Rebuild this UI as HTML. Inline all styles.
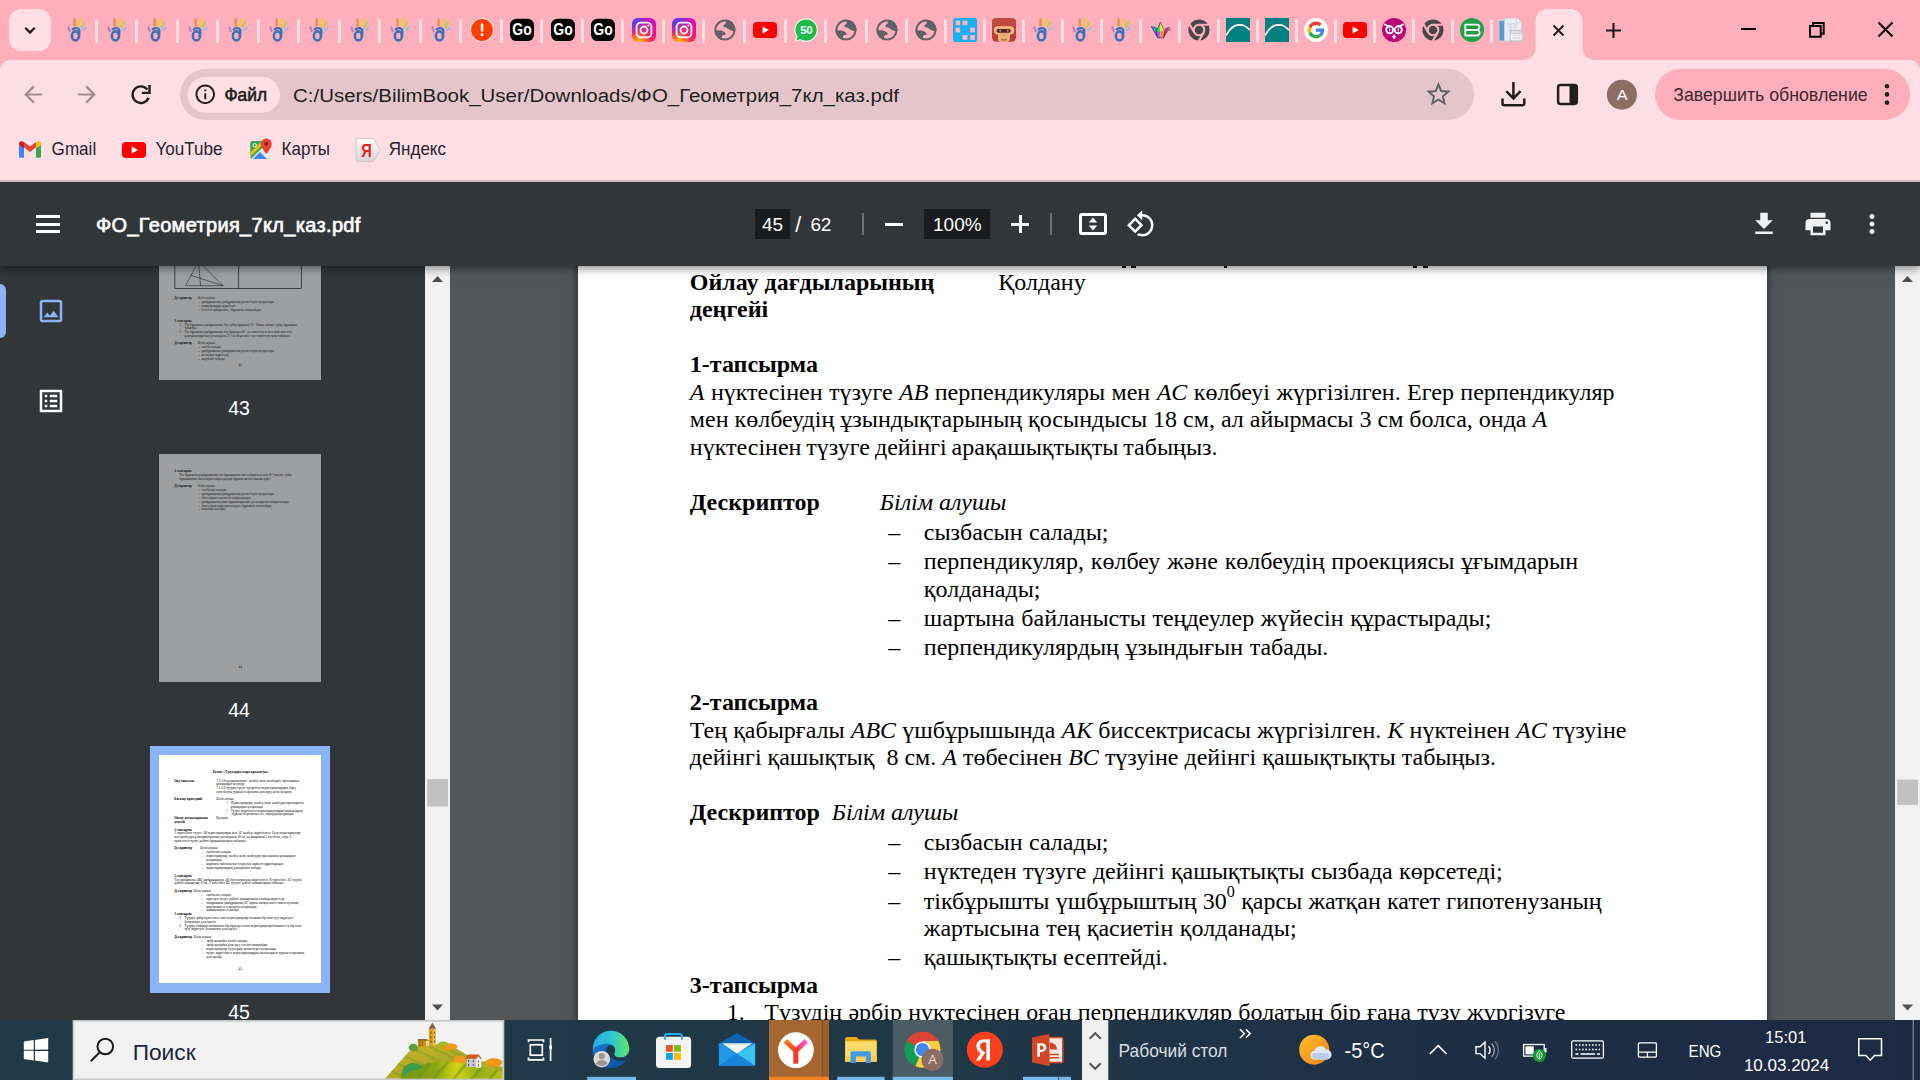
<!DOCTYPE html>
<html lang="ru">
<head>
<meta charset="utf-8">
<title>ФО_Геометрия_7кл_каз.pdf</title>
<style>
*{box-sizing:border-box;margin:0;padding:0}
html,body{width:1920px;height:1080px;overflow:hidden;background:#525659;font-family:"Liberation Sans",sans-serif}
.abs{position:absolute}
svg{position:absolute;display:block;overflow:visible}
.t{position:absolute;white-space:pre;line-height:1}
/* ---------- chrome top ---------- */
#tabstrip{z-index:6;position:absolute;left:0;top:0;width:1920px;height:80px;background:#ffaebb}
#toolbar{z-index:7;position:absolute;left:0;top:60px;width:1920px;height:121px;background:#ffdfe5;border-radius:11px 11px 0 0}
#tbline{z-index:7;position:absolute;left:0;top:180px;width:1920px;height:2px;background:#d4b7bd}
.sep{position:absolute;top:19.3px;width:3px;height:23.6px;border-radius:2px;background:#ffdfe5}
/* ---------- pdf viewer ---------- */
#pdfbar{position:absolute;left:0;top:182px;width:1920px;height:84px;background:#323639;z-index:5;box-shadow:0 2px 9px rgba(0,0,0,.5)}
#side{z-index:2;position:absolute;left:0;top:266px;width:425px;height:754px;background:#323639;overflow:hidden}
#sidescroll{z-index:2;position:absolute;left:425px;top:266px;width:25px;height:754px;background:#f1f1f1}
#mainscroll{z-index:2;position:absolute;left:1895px;top:266px;width:25px;height:754px;background:#f1f1f1}
#content{position:absolute;left:0;top:0;width:1920px;height:1080px;background:#525659;overflow:hidden}
.pg{position:absolute;width:1189px;height:1683px;background:#fff}
#page{box-shadow:0 0 9px rgba(0,0,0,.5)}
.thumb{position:absolute;left:158.9px;width:162.2px;height:228.2px;overflow:hidden;background:#fff}
.tp{left:0;top:0;transform:scale(.13642);transform-origin:0 0}
.tnum{position:absolute;left:139px;width:200px;text-align:center;color:#fff;font-size:19.5px;line-height:24px}
.d{position:absolute;white-space:pre;margin-left:-0.7px;margin-top:0.5px;font-family:"Liberation Serif",serif;font-size:24px;line-height:28px;color:#000}
.d b{font-weight:bold}
.d .sup{font-size:16px;position:relative;top:-12px}
.d i{font-style:italic}

/* pdf toolbar items */
#pdfbar .w{color:#fff}
.pbox{position:absolute;top:27px;height:30px;background:#191b1c}
.ptxt{position:absolute;white-space:pre;color:#fff;font-size:19px;line-height:30px;top:28px}
.psep{position:absolute;top:31px;width:1.6px;height:22px;background:rgba(255,255,255,.3)}
/* ---------- taskbar ---------- */
#taskbar{position:absolute;left:0;top:1020px;width:1920px;height:60px;background:#1c2c42;z-index:9;overflow:hidden}
</style>
</head>
<body>
<div id="tabstrip"><svg width="0" height="0" style="position:absolute"><defs>
<symbol id="hand" viewBox="0 0 24 24"><g fill="none" stroke-linecap="round"><path d="M9.600 1.500v5.800" stroke="#e0913a" stroke-width="2.400" opacity=".9"/><path d="M13.900 7.200l1.600-5.900" stroke="#f2c93a" stroke-width="2.600" opacity=".9"/><path d="M16.700 9l2.500-4.800" stroke="#b4cf4c" stroke-width="2.300" opacity=".9"/><path d="M18 12.200l3-2.400" stroke="#7cc3ee" stroke-width="1.900" opacity=".9"/><path d="M3.300 9.300l1.500 4" stroke="#a877c6" stroke-width="2" opacity=".85"/><ellipse cx="10.400" cy="17.900" rx="3.500" ry="4.500" stroke="#3b73ba" stroke-width="2.600"/><path d="M7.800 11.300c2.300-1.700 5.600-1.500 6.300.6.400 1.400.1 3.600 0 6" stroke="#3b73ba" stroke-width="2.400"/></g></symbol>
<symbol id="globe" viewBox="0 0 24 24"><clipPath id="gc"><circle cx="12" cy="12" r="10.500"/></clipPath><g clip-path="url(#gc)" fill="#5f6368"><path d="M13.400 0L24 0 24 12.600 19.600 13 17 12.100 15.100 10.800 13.200 9.600 10.400 9 10.700 7 12.600 5.400z"/><path d="M0 12.500L4.500 12.200 8.300 12.600 11.400 13.900 12.900 16 12 17.100 10.100 17.100 8.900 18.300 9.300 24 0 24z"/></g><circle cx="12" cy="12" r="9.600" fill="none" stroke="#5f6368" stroke-width="2"/></symbol>
<symbol id="go" viewBox="0 0 24 24"><rect x="0" y="0.7" width="24" height="22.4" rx="6.5" fill="#000"/><text x="2.300" y="17.200" textLength="19.400" lengthAdjust="spacingAndGlyphs" font-family="Liberation Sans" font-weight="bold" font-size="16.500" fill="#fff">Go</text></symbol>
<radialGradient id="igg" cx="0.28" cy="1.08" r="1.300"><stop offset="0" stop-color="#ffd521"/><stop offset=".16" stop-color="#ff9a1a"/><stop offset=".40" stop-color="#ff2a5a"/><stop offset=".70" stop-color="#e10ea0"/><stop offset="1" stop-color="#c016c8"/></radialGradient><radialGradient id="igb" cx="0" cy="0" r=".750"><stop offset="0" stop-color="#4a4ff0"/><stop offset=".450" stop-color="#5a3fe8" stop-opacity=".8"/><stop offset="1" stop-color="#7a30d8" stop-opacity="0"/></radialGradient>
<symbol id="ig" viewBox="0 0 24 24"><rect width="24" height="24" rx="6" fill="url(#igg)"/><rect width="24" height="24" rx="6" fill="url(#igb)"/><rect x="4.6" y="4.6" width="14.8" height="14.8" rx="4.2" fill="none" stroke="#fff" stroke-width="1.8"/><circle cx="12" cy="12" r="3.5" fill="none" stroke="#fff" stroke-width="1.8"/><circle cx="16.4" cy="7.6" r="1" fill="#fff"/></symbol>
<symbol id="yt" viewBox="0 0 24 24"><rect x="0" y="4" width="24" height="16" rx="4" fill="#f00"/><path d="M9.6 8.4v7.2l6.3-3.6z" fill="#fff"/></symbol>
<symbol id="warn" viewBox="0 0 24 24"><circle cx="12" cy="12" r="12" fill="#ffe9e6"/><circle cx="12" cy="12" r="10.9" fill="#ff3d00"/><rect x="10.8" y="5.6" width="2.5" height="8" rx=".6" fill="#fff"/><rect x="10.8" y="15.3" width="2.5" height="2.7" rx=".6" fill="#fff"/></symbol>
<symbol id="wa" viewBox="0 0 24 24"><path d="M12 .2a11.8 11.8 0 1 1-5.9 22L.6 23.8l1.6-5.4A11.8 11.8 0 0 1 12 .2z" fill="#e9fbe9"/><path d="M12 1.4a10.6 10.6 0 1 1-5.6 19.6L2.4 22.2l1.2-3.9A10.6 10.6 0 0 1 12 1.4z" fill="#1dbb4b"/><text x="12.2" y="16.2" text-anchor="middle" font-family="Liberation Sans" font-weight="bold" font-size="11.5" fill="#fff" letter-spacing="-.4">50</text></symbol>
<symbol id="grid" viewBox="0 0 24 24"><rect width="24" height="24" rx="2.5" fill="#1ab1f3"/><g fill="#ffb7c6"><rect x="2.6" y="2.6" width="4.6" height="4.6"/><rect x="9.6" y="2.6" width="4.8" height="4.6"/><rect x="2.6" y="9.6" width="4.6" height="4.8"/><rect x="17.2" y="9.6" width="4.6" height="4.8"/><rect x="9.6" y="17" width="4.8" height="4.8"/><rect x="17.2" y="17" width="4.6" height="4.8"/></g></symbol>
<symbol id="monkey" viewBox="0 0 24 24"><rect width="24" height="23.800" rx="4.500" fill="#bb3f34"/><path d="M4.500 0h15a4.500 4.500 0 0 1 4.500 4.500V9H0V4.500A4.500 4.500 0 0 1 4.500 0z" fill="#c24a3c"/><rect x="1.800" y="8.300" width="20.500" height="8.200" rx="4.100" fill="#f2c183"/><path d="M6 14h11.800v6.800a3 3 0 0 1-3 3H9a3 3 0 0 1-3-3z" fill="#f2c183"/><rect x="3.200" y="9.700" width="17.700" height="5.600" rx="2.800" fill="#ecb27a"/><rect x="7.300" y="15" width="9.200" height="8.800" fill="#e9ad76"/><rect x="4.500" y="11" width="14.200" height="3.700" rx="1.850" fill="#5a2018"/><circle cx="8.200" cy="12.800" r="1" fill="#9aa0a8"/><circle cx="15.700" cy="12.800" r="1" fill="#9aa0a8"/><rect x="9.500" y="16.600" width="5" height=".9" fill="#d49a62"/><rect x="9" y="21.100" width="6" height="1.300" fill="#a8703a"/></symbol>
<symbol id="crane" viewBox="0 0 24 24"><g stroke="#15152a" stroke-width=".55" stroke-linejoin="round"><path d="M2.100 8.300L8.400 10.600 7.200 13.800 8.700 19.700z" fill="#2f9cf0"/><path d="M15.700 13.800L16.400 10.800 19.800 9.300 21.600 11.700 18.900 12.300 14.500 19.700z" fill="#f03c8a"/><path d="M20.300 9.900l1.300 1.800-1.900.5z" fill="#9ab0a8" stroke="none"/></g><path d="M11.400 4L7.200 13.800h4.200z" fill="#46e04a"/><path d="M11.400 4l4.300 9.800h-4.300z" fill="#ffe050"/><path d="M7.200 13.800h4.200v6.200l-2.700-.3z" fill="#a55cf5"/><path d="M11.400 13.800h4.300l-1.200 5.900-3.100.3z" fill="#ff8c3a"/><path d="M11.400 4L7.200 13.800l1.500 5.900 2.700.3 3.100-.3 1.200-5.900z" fill="none" stroke="#15152a" stroke-width=".55" stroke-linejoin="round"/><path d="M7.200 13.800h8.500" stroke="#15152a" stroke-width=".4" opacity=".6"/></symbol>
<symbol id="chrome" viewBox="0 0 24 24"><circle cx="12" cy="12" r="10.600" fill="#46474a"/><g stroke="#ffadba" stroke-width="2.100" fill="none"><circle cx="12" cy="12" r="5.300"/><path d="M12 6.700h9.600M7.400 14.700L2.600 6.400M16.600 14.700l-4.900 8.400"/></g><circle cx="12" cy="12" r="3.600" fill="#46474a"/></symbol>
<symbol id="teal" viewBox="0 0 24 24"><rect width="24" height="24" fill="#00807f"/><path d="M0 17.500C3.500 11 8 7.500 11.500 7h5c3 1 5.500 3 7.500 5" fill="none" stroke="#f2ecec" stroke-width="1.800"/></symbol>
<symbol id="goog" viewBox="0 0 24 24"><circle cx="12" cy="12" r="12" fill="#fff"/><g transform="translate(3.600 3.600) scale(.35)"><path fill="#EA4335" d="M24 9.500c3.540 0 6.710 1.220 9.210 3.600l6.850-6.850C35.900 2.380 30.470 0 24 0 14.620 0 6.510 5.380 2.560 13.220l7.980 6.190C12.430 13.720 17.740 9.500 24 9.500z"/><path fill="#4285F4" d="M46.980 24.550c0-1.570-.15-3.090-.38-4.550H24v9.020h12.940c-.58 2.960-2.260 5.480-4.780 7.180l7.730 6c4.510-4.180 7.090-10.360 7.090-17.650z"/><path fill="#FBBC05" d="M10.530 28.590c-.48-1.450-.76-2.990-.76-4.590s.27-3.140.76-4.590l-7.980-6.190C.92 16.460 0 20.120 0 24c0 3.880.92 7.540 2.560 10.780l7.970-6.190z"/><path fill="#34A853" d="M24 48c6.480 0 11.930-2.130 15.890-5.810l-7.730-6c-2.150 1.450-4.920 2.300-8.160 2.300-6.260 0-11.570-4.220-13.470-9.910l-7.980 6.190C6.510 42.620 14.620 48 24 48z"/></g></symbol>
<symbol id="owl" viewBox="0 0 24 24"><circle cx="12" cy="12" r="12" fill="#bb0676"/><g fill="none" stroke="#fff" stroke-width="1.900"><circle cx="7.700" cy="11.800" r="3.500"/><circle cx="16.300" cy="11.800" r="3.500"/><path d="M3 6.400c1.600 1.300 3.400 1.900 5 1.900M21 6.400c-1.600 1.300-3.400 1.900-5 1.900" stroke-linecap="round"/></g><rect x="7" y="10.300" width="1.300" height="3" rx=".6" fill="#fff"/><rect x="15.700" y="10.300" width="1.300" height="3" rx=".6" fill="#fff"/><path d="M12 16.200l2 2.500-2 2.600-2-2.600z" fill="#fff"/></symbol>
<symbol id="bgreen" viewBox="0 0 24 24"><circle cx="12" cy="12" r="12" fill="#1fa049"/><path d="M5.300 6.700h11.200c1.800 0 2.900 1 2.900 2.500 0 1.300-.7 2.300-1.900 2.800 1.400.4 2.200 1.400 2.200 2.800 0 1.700-1.200 2.700-3.200 2.700H5.300z" fill="#0f9a3c" stroke="#fff" stroke-width="1.800" stroke-linejoin="round"/><path d="M5.300 12h12.500" stroke="#fff" stroke-width="2"/></symbol>
<symbol id="docs" viewBox="0 0 24 24"><path d="M0 2.500h5.500V23H0z" fill="#5b9bd5"/><path d="M0 2.500h5.500V23H0z" fill="none" stroke="#c9dcef" stroke-width=".8"/><path d="M5.500 0h12l5 4.500V23H5.500z" fill="#e8edf3" stroke="#c3ccd8" stroke-width=".8"/><path d="M17.500 0v4.500h5" fill="#fff" stroke="#c3ccd8" stroke-width=".8"/><g stroke="#cfd6e0" stroke-width=".9"><path d="M8 6h11M8 9h11M8 12h11M12 5v9M16 5v9"/></g><rect x="11.200" y="12.800" width="12" height="10" fill="#f4f6f9" stroke="#b9c3d0" stroke-width=".9"/><rect x="11.200" y="12.800" width="12" height="2.600" fill="#dfe5ee" stroke="#b9c3d0" stroke-width=".9"/><rect x="14" y="17.500" width="7" height="3.200" fill="#e9edf3" stroke="#cfd6e0" stroke-width=".7"/></symbol>
</defs></svg>
<div class="abs" style="left:9px;top:9px;width:42px;height:42px;border-radius:12px;background:#ffdfe5"></div>
<svg style="left:21px;top:21px" width="18" height="18" viewBox="0 0 18 18"><path d="M4.300 6.800L9 11.500l4.700-4.700" fill="none" stroke="#1f1f1f" stroke-width="2.300"/></svg>
<div class="sep" style="left:94.8px"></div><div class="sep" style="left:134.8px"></div><div class="sep" style="left:176.0px"></div><div class="sep" style="left:216.0px"></div><div class="sep" style="left:257.2px"></div><div class="sep" style="left:297.2px"></div><div class="sep" style="left:337.8px"></div><div class="sep" style="left:378.0px"></div><div class="sep" style="left:419.0px"></div><div class="sep" style="left:459.0px"></div><div class="sep" style="left:500.0px"></div><div class="sep" style="left:540.0px"></div><div class="sep" style="left:580.5px"></div><div class="sep" style="left:621.0px"></div><div class="sep" style="left:661.5px"></div><div class="sep" style="left:702.0px"></div><div class="sep" style="left:743.0px"></div><div class="sep" style="left:783.5px"></div><div class="sep" style="left:824.0px"></div><div class="sep" style="left:864.5px"></div><div class="sep" style="left:904.5px"></div><div class="sep" style="left:944.0px"></div><div class="sep" style="left:982.5px"></div><div class="sep" style="left:1022.0px"></div><div class="sep" style="left:1061.0px"></div><div class="sep" style="left:1100.0px"></div><div class="sep" style="left:1139.0px"></div><div class="sep" style="left:1177.9px"></div><div class="sep" style="left:1217.0px"></div><div class="sep" style="left:1256.0px"></div><div class="sep" style="left:1295.0px"></div><div class="sep" style="left:1334.1px"></div><div class="sep" style="left:1372.9px"></div><div class="sep" style="left:1411.9px"></div><div class="sep" style="left:1451.0px"></div><div class="sep" style="left:1490.0px"></div>
<svg style="left:64.5px;top:18.0px" width="24" height="24"><use href="#hand"/></svg><svg style="left:104.8px;top:18.0px" width="24" height="24"><use href="#hand"/></svg><svg style="left:145.2px;top:18.0px" width="24" height="24"><use href="#hand"/></svg><svg style="left:185.8px;top:18.0px" width="24" height="24"><use href="#hand"/></svg><svg style="left:226.3px;top:18.0px" width="24" height="24"><use href="#hand"/></svg><svg style="left:267.0px;top:18.0px" width="24" height="24"><use href="#hand"/></svg><svg style="left:307.3px;top:18.0px" width="24" height="24"><use href="#hand"/></svg><svg style="left:347.7px;top:18.0px" width="24" height="24"><use href="#hand"/></svg><svg style="left:388.2px;top:18.0px" width="24" height="24"><use href="#hand"/></svg><svg style="left:428.8px;top:18.0px" width="24" height="24"><use href="#hand"/></svg><svg style="left:469.9px;top:18.0px" width="24" height="24"><use href="#warn"/></svg><svg style="left:510.0px;top:18.0px" width="24" height="24"><use href="#go"/></svg><svg style="left:551.0px;top:18.0px" width="24" height="24"><use href="#go"/></svg><svg style="left:591.0px;top:18.0px" width="24" height="24"><use href="#go"/></svg><svg style="left:632.0px;top:18.0px" width="24" height="24"><use href="#ig"/></svg><svg style="left:672.0px;top:18.0px" width="24" height="24"><use href="#ig"/></svg><svg style="left:713.0px;top:18.0px" width="24" height="24"><use href="#globe"/></svg><svg style="left:752.8px;top:18.0px" width="24" height="24"><use href="#yt"/></svg><svg style="left:794.0px;top:18.0px" width="24" height="24"><use href="#wa"/></svg><svg style="left:834.0px;top:18.0px" width="24" height="24"><use href="#globe"/></svg><svg style="left:874.6px;top:18.0px" width="24" height="24"><use href="#globe"/></svg><svg style="left:913.8px;top:18.0px" width="24" height="24"><use href="#globe"/></svg><svg style="left:953.0px;top:18.0px" width="24" height="24"><use href="#grid"/></svg><svg style="left:992.0px;top:18.0px" width="24" height="24"><use href="#monkey"/></svg><svg style="left:1031.3px;top:18.0px" width="24" height="24"><use href="#hand"/></svg><svg style="left:1070.3px;top:18.0px" width="24" height="24"><use href="#hand"/></svg><svg style="left:1109.4px;top:18.0px" width="24" height="24"><use href="#hand"/></svg><svg style="left:1148.6px;top:18.0px" width="24" height="24"><use href="#crane"/></svg><svg style="left:1187.0px;top:18.0px" width="24" height="24"><use href="#chrome"/></svg><svg style="left:1226.0px;top:18.0px" width="24" height="24"><use href="#teal"/></svg><svg style="left:1265.0px;top:18.0px" width="24" height="24"><use href="#teal"/></svg><svg style="left:1304.0px;top:18.0px" width="24" height="24"><use href="#goog"/></svg><svg style="left:1343.0px;top:18.0px" width="24" height="24"><use href="#yt"/></svg><svg style="left:1382.0px;top:18.0px" width="24" height="24"><use href="#owl"/></svg><svg style="left:1421.0px;top:18.0px" width="24" height="24"><use href="#chrome"/></svg><svg style="left:1460.0px;top:18.0px" width="24" height="24"><use href="#bgreen"/></svg><svg style="left:1499.0px;top:18.0px" width="24" height="24"><use href="#docs"/></svg>
<svg style="left:1523px;top:9px" width="73" height="51" viewBox="0 0 73 51"><path d="M0 51c7 0 12.600-5 12.600-12V12c0-6.600 5.400-12 12-12h23c6.600 0 12 5.400 12 12v27c0 7 5.600 12 12.600 12z" fill="#ffdfe5"/></svg>
<svg style="left:1552.500px;top:24.500px" width="11" height="11" viewBox="0 0 11 11"><path d="M.5.500l10 10M10.500.500l-10 10" stroke="#1f1f1f" stroke-width="2" fill="none"/></svg>
<svg style="left:1605.500px;top:22.500px" width="15" height="15" viewBox="0 0 15 15"><path d="M7.500 0v15M0 7.500h15" stroke="#1f1f1f" stroke-width="2.200" fill="none"/></svg>
<div class="abs" style="left:1741px;top:28px;width:15px;height:2px;background:#000"></div>
<svg style="left:1808px;top:21px" width="17" height="17" viewBox="0 0 17 17"><path d="M2 5h10.700v10.700H2z M5 5V2h10.700v10.700h-3" fill="none" stroke="#000" stroke-width="2"/></svg>
<svg style="left:1878px;top:22px" width="15" height="15" viewBox="0 0 15 15"><path d="M.5.500l14 14M14.500.500l-14 14" stroke="#000" stroke-width="2" fill="none"/></svg>
</div><!--/tabstrip-->
<div id="toolbar"><svg style="left:0;top:0" width="1920" height="122" viewBox="0 60 1920 122" font-family="Liberation Sans, sans-serif">
<g transform="translate(33.1 94.5) scale(1.11) translate(-12 -12)"><path fill="#a08d93" d="M20 11H7.83l5.59-5.59L12 4l-8 8 8 8 1.41-1.41L7.83 13H20v-2z"/></g>
<g transform="translate(87 94.5) scale(-1.11 1.11) translate(-12 -12)"><path fill="#a08d93" d="M20 11H7.83l5.59-5.59L12 4l-8 8 8 8 1.41-1.41L7.83 13H20v-2z"/></g>
<g fill="none" stroke="#1f1f1f" stroke-width="2.400"><path d="M147.300 89.400A8.300 8.300 0 1 0 148.600 97.800"/><path d="M149.500 85v7.900h-7.700"/></g>
<rect x="180" y="69" width="1294" height="51" rx="25.5" fill="#e3c5cb"/>
<rect x="187.5" y="77" width="92.5" height="35.5" rx="17.75" fill="#ffdfe5"/>
<g transform="translate(205.25 94.25) scale(.975) translate(-12 -12)"><path fill="#1f1f1f" d="M11 17h2v-6h-2v6zm1-15C6.480 2 2 6.480 2 12s4.480 10 10 10 10-4.480 10-10S17.520 2 12 2zm0 18c-4.410 0-8-3.590-8-8s3.590-8 8-8 8 3.590 8 8-3.590 8-8 8zM11 9h2V7h-2v2z"/></g>
<text x="224.4" y="101.1" textLength="42.6" lengthAdjust="spacingAndGlyphs" font-size="18.2" font-weight="normal" fill="#1f1f1f" stroke="#1f1f1f" stroke-width=".65">Файл</text>
<text x="293" y="101.6" textLength="606.0" lengthAdjust="spacingAndGlyphs" font-size="18.8" font-weight="normal" fill="#1f1f1f" >C:/Users/BilimBook_User/Downloads/ФО_Геометрия_7кл_каз.pdf</text>
<g transform="translate(1423.8 79.6) scale(1.22)"><path fill="#5f6368" d="M22 9.240l-7.190-.620L12 2 9.190 8.630 2 9.240l5.460 4.730L5.820 21 12 17.270 18.180 21l-1.630-7.030L22 9.240zM12 15.400l-3.760 2.270 1-4.280-3.320-2.880 4.380-.380L12 6.100l1.710 4.040 4.380.380-3.320 2.880 1 4.280L12 15.400z"/></g>
<g fill="none" stroke="#1f1f1f" stroke-width="2.5"><path d="M1502.500 98.500v4.700a2 2 0 0 0 2 2h17.800a2 2 0 0 0 2-2v-4.700"/><path d="M1513.400 82v16M1506.200 91.200l7.200 7.200 7.200-7.200"/></g>
<rect x="1558.100" y="85.100" width="18.700" height="18.800" rx="2.300" fill="none" stroke="#1f1f1f" stroke-width="2.500"/><path d="M1569.500 85h6a1.500 1.500 0 0 1 1.500 1.500v16a1.500 1.500 0 0 1-1.500 1.500h-6z" fill="#1f1f1f"/>
<circle cx="1621.900" cy="94.700" r="15" fill="#8d6e63"/>
<text x="1616.7" y="100" textLength="10.9" lengthAdjust="spacingAndGlyphs" font-size="15" font-weight="normal" fill="#fff" >A</text>
<rect x="1655" y="68.800" width="255.200" height="51.200" rx="25.600" fill="#ffaebb"/>
<text x="1673.2" y="100.7" textLength="194.5" lengthAdjust="spacingAndGlyphs" font-size="17.6" font-weight="normal" fill="#3a2a2f" >Завершить обновление</text>
<g fill="#1f1f1f"><circle cx="1887" cy="86.200" r="2.300"/><circle cx="1887" cy="94.400" r="2.300"/><circle cx="1887" cy="102.600" r="2.300"/></g>
<g><path d="M19 145v11.200a1.600 1.600 0 0 0 1.600 1.600H24V147z" fill="#4285f4"/><path d="M41 145v11.200a1.600 1.600 0 0 1-1.600 1.600H36V147z" fill="#34a853"/><path d="M24 147.300v-5.400l6 4.600 6-4.600v5.400l-6 4.600z" fill="#ea4335"/><path d="M19 145v-1.300c0-2 2.300-3.100 3.900-1.900l1.100.8v5.400z" fill="#c5221f"/><path d="M41 145v-1.300c0-2-2.300-3.100-3.900-1.900l-1.100.8v5.400z" fill="#fbbc04"/></g>
<text x="51.6" y="155.3" textLength="44.6" lengthAdjust="spacingAndGlyphs" font-size="17.8" font-weight="normal" fill="#23232b" >Gmail</text>
<rect x="122" y="142" width="24" height="16" rx="4" fill="#f00"/><path d="M131.600 146.300v7.400l6.400-3.700z" fill="#fff"/>
<text x="155.4" y="155.3" textLength="67.2" lengthAdjust="spacingAndGlyphs" font-size="17.8" font-weight="normal" fill="#23232b" >YouTube</text>
<g><clipPath id="mc"><rect x="250.300" y="141" width="18.700" height="18" rx="2"/></clipPath><g clip-path="url(#mc)"><rect x="250" y="140" width="20" height="20" fill="#34a853"/><path d="M250 160l19-19v19z" fill="#e8eaed"/><path d="M250 153l12-12h4l-16 16z" fill="#fbbc04"/><path d="M252 160l8-8 8 8z" fill="#4285f4"/><circle cx="254.700" cy="145.200" r="1.700" fill="none" stroke="#fff" stroke-width="1"/></g><path d="M266.300 138.600c-3 0-5.400 2.300-5.400 5.300 0 3.800 5.400 10 5.400 10s5.400-6.200 5.400-10c0-3-2.400-5.300-5.400-5.300z" fill="#ea4335"/><circle cx="266.300" cy="143.800" r="1.800" fill="#7b1a14"/></g>
<text x="281.6" y="155.3" textLength="48.4" lengthAdjust="spacingAndGlyphs" font-size="17.8" font-weight="normal" fill="#23232b" >Карты</text>
<defs><linearGradient id="yg" x1="0" y1="0" x2="0" y2="1"><stop offset="0" stop-color="#fff"/><stop offset="1" stop-color="#d8d4d6"/></linearGradient></defs><path d="M358 138.400h15.300l6.700 11.600-6.700 11.600H358a1.800 1.800 0 0 1-1.800-1.800v-19.600a1.800 1.800 0 0 1 1.800-1.800z" fill="url(#yg)" stroke="#c9bcc0" stroke-width=".8"/><text x="361.300" y="156.800" font-size="18.500" font-weight="bold" fill="#e8201a" textLength="10.500" lengthAdjust="spacingAndGlyphs">Я</text>
<text x="388.8" y="155.3" textLength="57.2" lengthAdjust="spacingAndGlyphs" font-size="17.8" font-weight="normal" fill="#23232b" >Яндекс</text>
</svg></div><!--/toolbar-->
<div id="tbline"></div>
<div id="content"><div id="page" class="pg" style="left:578px;top:-182px"><div class="d" style="left:394.0px;top:111.90px"><b>Бөлім: «Түзулердің өзара орналасуы»</b></div><div class="d" style="left:112.5px;top:172.90px"><b>Оқу мақсаты</b></div><div class="d" style="left:421.0px;top:172.90px">7.1.2.8 қолданылатын:  көлбеу және көлбеудің  проекциясы</div><div class="d" style="left:421.0px;top:200.40px">ұғымдарын меңгеру</div><div class="d" style="left:421.0px;top:227.90px">7.1.2.9 түзудің түзуге түсірілген перпендикулярдың біреу</div><div class="d" style="left:421.0px;top:255.40px">ғана болуы туралы теореманы дәлелдеу және қолдану</div><div class="d" style="left:112.5px;top:310.90px"><b>Бағалау критерийі</b></div><div class="d" style="left:421.0px;top:310.90px"><i>Білім алушы</i></div><div class="d" style="left:495.0px;top:338.90px">•</div><div class="d" style="left:527.0px;top:338.90px">Перпендикуляр, көлбеу және көлбеудің проекциясы</div><div class="d" style="left:527.0px;top:366.40px">ұғымдарын қолданады</div><div class="d" style="left:495.0px;top:394.40px">•</div><div class="d" style="left:527.0px;top:394.40px">Түзуге жүргізілген перпендикулярдың жалғыздығы</div><div class="d" style="left:533.0px;top:420.90px">туралы теореманы есте сақтауды қолданады</div><div class="d" style="left:112.5px;top:449.40px"><b>Ойлау дағдыларының</b></div><div class="d" style="left:421.0px;top:449.40px">Қолдану</div><div class="d" style="left:112.5px;top:476.90px"><b>деңгейі</b></div><div class="d" style="left:112.5px;top:531.90px"><b>1-тапсырма</b></div><div class="d" style="left:112.5px;top:559.40px;word-spacing:0.43px"><i>A</i> нүктесінен түзуге <i>AB</i> перпендикуляры мен <i>AC</i> көлбеуі жүргізілген. Егер перпендикуляр</div><div class="d" style="left:112.5px;top:586.90px">мен көлбеудің ұзындықтарының қосындысы 18 см, ал айырмасы 3 см болса, онда <i>A</i></div><div class="d" style="left:112.5px;top:614.40px;word-spacing:-1.05px">нүктесінен түзуге дейінгі арақашықтықты табыңыз.</div><div class="d" style="left:112.5px;top:669.40px"><b>Дескриптор</b></div><div class="d" style="left:302.5px;top:669.40px"><i>Білім алушы</i></div><div class="d" style="left:311.0px;top:699.40px">–</div><div class="d" style="left:346.5px;top:699.40px;word-spacing:0.5px">сызбасын салады;</div><div class="d" style="left:311.0px;top:728.65px">–</div><div class="d" style="left:346.5px;top:728.65px;word-spacing:0.8px">перпендикуляр, көлбеу және көлбеудің проекциясы ұғымдарын</div><div class="d" style="left:346.5px;top:756.15px">қолданады;</div><div class="d" style="left:311.0px;top:785.65px">–</div><div class="d" style="left:346.5px;top:785.65px;word-spacing:0.55px">шартына байланысты теңдеулер жүйесін құрастырады;</div><div class="d" style="left:311.0px;top:814.90px">–</div><div class="d" style="left:346.5px;top:814.90px;word-spacing:0.6px">перпендикулярдың ұзындығын табады.</div><div class="d" style="left:112.5px;top:869.90px"><b>2-тапсырма</b></div><div class="d" style="left:112.5px;top:897.40px;word-spacing:0.12px">Тең қабырғалы <i>ABC</i> үшбұрышында <i>AK</i> биссектрисасы жүргізілген. <i>K</i> нүктеінен <i>AC</i> түзуіне</div><div class="d" style="left:112.5px;top:924.90px">дейінгі қашықтық  8 см. <i>A</i> төбесінен <i>BC</i> түзуіне дейінгі қашықтықты табыңыз.</div><div class="d" style="left:112.5px;top:979.90px"><b>Дескриптор</b></div><div class="d" style="left:254.5px;top:979.90px"><i>Білім алушы</i></div><div class="d" style="left:311.0px;top:1009.40px">–</div><div class="d" style="left:346.5px;top:1009.40px;word-spacing:0.5px">сызбасын салады;</div><div class="d" style="left:311.0px;top:1038.65px">–</div><div class="d" style="left:346.5px;top:1038.65px;word-spacing:0.35px">нүктеден түзуге дейінгі қашықтықты сызбада көрсетеді;</div><div class="d" style="left:311.0px;top:1068.15px">–</div><div class="d" style="left:346.5px;top:1068.15px;word-spacing:0.3px">тікбұрышты үшбұрыштың 30<span class="sup">0</span> қарсы жатқан катет гипотенузаның</div><div class="d" style="left:346.5px;top:1095.65px;word-spacing:0.6px">жартысына тең қасиетін қолданады;</div><div class="d" style="left:311.0px;top:1124.90px">–</div><div class="d" style="left:346.5px;top:1124.90px">қашықтықты есептейді.</div><div class="d" style="left:112.5px;top:1152.40px"><b>3-тапсырма</b></div><div class="d" style="left:149.5px;top:1179.90px">1.</div><div class="d" style="left:187.0px;top:1179.90px;word-spacing:0.29px">Түзудің әрбір нүктесінен оған перпендикуляр болатын бір ғана түзу жүргізуге</div><div class="d" style="left:187.0px;top:1207.40px">болатынын дәлелдеңіз.</div><div class="d" style="left:149.5px;top:1235.90px">2.</div><div class="d" style="left:187.0px;top:1235.90px">Түзудің бойында жатпайтын бір нүктеден оған перпендикуляр болатын тек бір ғана</div><div class="d" style="left:187.0px;top:1263.40px">түзу жүргізуге болатынын дәлелдеңіз.</div><div class="d" style="left:112.5px;top:1318.40px"><b>Дескриптор</b></div><div class="d" style="left:254.5px;top:1318.40px"><i>Білім алушы</i></div><div class="d" style="left:311.0px;top:1347.90px">–</div><div class="d" style="left:346.5px;top:1347.90px">әрбір жағдайға сызба салады;</div><div class="d" style="left:311.0px;top:1377.40px">–</div><div class="d" style="left:346.5px;top:1377.40px">әрбір жағдайға дәлелдеу тәсілін анықтайды;</div><div class="d" style="left:311.0px;top:1406.90px">–</div><div class="d" style="left:346.5px;top:1406.90px">перпендикуляр түзулердің қасиеттерін қолданады;</div><div class="d" style="left:311.0px;top:1435.90px">–</div><div class="d" style="left:346.5px;top:1435.90px">түзуге жүргізілген перпендикулярдың жалғыздығы туралы теореманы</div><div class="d" style="left:346.5px;top:1463.40px">дәлелдейді.</div><div class="d" style="left:584.0px;top:1551.90px">45</div></div><div style="position:absolute;left:1121.5px;top:266px;width:4px;height:1.700px;background:#161616"></div><div style="position:absolute;left:1130.5px;top:266px;width:5px;height:1.700px;background:#161616"></div><div style="position:absolute;left:1223.5px;top:266px;width:3.5px;height:1.700px;background:#161616"></div><div style="position:absolute;left:1413px;top:266px;width:4px;height:1.700px;background:#161616"></div><div style="position:absolute;left:1423px;top:266px;width:5px;height:1.700px;background:#161616"></div></div><!--/content-->
<div id="side"><div class="abs" style="left:0;top:18px;width:6px;height:54px;background:#8ab4f8;border-radius:0 6px 6px 0"></div><svg style="left:36px;top:30px" width="30" height="30" viewBox="0 0 24 24"><path fill="#8ab4f8" d="M19 5v14H5V5h14m0-2H5c-1.100 0-2 .900-2 2v14c0 1.100.900 2 2 2h14c1.100 0 2-.900 2-2V5c0-1.100-.900-2-2-2zm-4.860 8.860l-3 3.870L9 13.140 6 17h12l-3.860-5.140z"/></svg><svg style="left:36px;top:120px" width="30" height="30" viewBox="0 0 24 24"><path fill="#fff" d="M19 5v14H5V5h14m1.100-2H3.900c-.500 0-.900.400-.900.900v16.200c0 .400.400.900.900.900h16.200c.400 0 .900-.500.900-.900V3.900c0-.500-.500-.900-.900-.900zM11 7h6v2h-6V7zm0 4h6v2h-6v-2zm0 4h6v2h-6zM7 7h2v2H7zm0 4h2v2H7zm0 4h2v2H7z"/></svg><div class="thumb" style="top:-114.2px;opacity:.527;"><div class="pg tp"><div style="position:absolute;left:114px;top:760px;width:933px;height:244px;border:5px solid #000"></div><div style="position:absolute;left:582px;top:760px;width:5px;height:244px;background:#000"></div><svg style="left:190px;top:800px" width="300" height="190" viewBox="0 0 300 190"><path d="M5 180L100 0 280 180zM100 0l15 180M45 105l235 75" fill="none" stroke="#000" stroke-width="4"/></svg><div class="d" style="left:112px;top:1055.9px"><b>Дескриптор</b></div><div class="d" style="left:284px;top:1055.9px"><i>Білім алушы</i></div><div class="d" style="left:290px;top:1084.9px">–</div><div class="d" style="left:312px;top:1084.9px">үшбұрыштың үшбұрыштық қасиеттерін қолданады;</div><div class="d" style="left:290px;top:1112.5px">–</div><div class="d" style="left:312px;top:1112.5px">анықтауларды жүргізеді;</div><div class="d" style="left:290px;top:1140.1px">–</div><div class="d" style="left:312px;top:1140.1px">белгісіз қабырғаны / бұрышты анықтайды.</div><div class="d" style="left:112px;top:1222.9px"><b>3-тапсырма</b></div><div class="d" style="left:150px;top:1250.4px">1.</div><div class="d" style="left:187px;top:1250.4px">Тік бұрышты үшбұрыштың бір сүйір бұрышы 35°. Оның екінші сүйір бұрышын</div><div class="d" style="left:187px;top:1277.9px">табыңыз.</div><div class="d" style="left:150px;top:1305.9px">2.</div><div class="d" style="left:187px;top:1305.9px">Тік бұрышты үшбұрыштың бір бұрышы 60<span class="sup">0</span>, ал гипотенуза мен кіші катеттің</div><div class="d" style="left:187px;top:1333.4px">ұзындықтарының қосындысы 27 см. Кіші катет пен гипотенузаны табыңыз.</div><div class="d" style="left:112px;top:1387.9px"><b>Дескриптор</b></div><div class="d" style="left:284px;top:1387.9px"><i>Білім алушы</i></div><div class="d" style="left:290px;top:1416.9px">–</div><div class="d" style="left:312px;top:1416.9px">сызба салады;</div><div class="d" style="left:290px;top:1444.5px">–</div><div class="d" style="left:312px;top:1444.5px">үшбұрыштың үшбұрыштық қасиеттерін қолданады;</div><div class="d" style="left:290px;top:1472.1px">–</div><div class="d" style="left:312px;top:1472.1px">жетпейді жүргізеді;</div><div class="d" style="left:290px;top:1499.7px">–</div><div class="d" style="left:312px;top:1499.7px">жауабын табады.</div><div class="d" style="left:584px;top:1549.9px">43</div></div></div><div class="thumb" style="top:187.6px;opacity:.527;"><div class="pg tp"><div class="d" style="left:112px;top:112.9px"><b>4-тапсырма</b></div><div class="d" style="left:150px;top:140.4px">Тік бұрышты үшбұрыштың тік бұрышынан биссектрисасы мен 60° жасап, сүйір</div><div class="d" style="left:150px;top:167.9px">бұрышының биссектрисалары қандай бұрыш жасап қиылысады?</div><div class="d" style="left:112px;top:222.9px"><b>Дескриптор</b></div><div class="d" style="left:284px;top:222.9px"><i>Білім алушы</i></div><div class="d" style="left:290px;top:251.9px">–</div><div class="d" style="left:312px;top:251.9px">сызбасын салады;</div><div class="d" style="left:290px;top:279.5px">–</div><div class="d" style="left:312px;top:279.5px">үшбұрыштың үшбұрыштық қасиеттерін қолданады;</div><div class="d" style="left:290px;top:307.1px">–</div><div class="d" style="left:312px;top:307.1px">биссектриса қасиетін пайдаланады;</div><div class="d" style="left:290px;top:334.7px">–</div><div class="d" style="left:312px;top:334.7px">үшбұрыштың ішкі бұрыштарының қосындысын пайдаланады;</div><div class="d" style="left:290px;top:362.3px">–</div><div class="d" style="left:312px;top:362.3px">биссектрисалар арасындағы бұрышты анықтайды;</div><div class="d" style="left:290px;top:389.9px">–</div><div class="d" style="left:312px;top:389.9px">жауабын жазады.</div><div class="d" style="left:584px;top:1549.9px">44</div></div></div><div class="abs" style="left:149.900px;top:480.2px;width:180.200px;height:246.8px;background:#8ab4f8"></div><div class="thumb" style="top:489.2px;"><div class="pg tp"><div class="d" style="left:394.0px;top:111.90px"><b>Бөлім: «Түзулердің өзара орналасуы»</b></div><div class="d" style="left:112.5px;top:172.90px"><b>Оқу мақсаты</b></div><div class="d" style="left:421.0px;top:172.90px">7.1.2.8 қолданылатын:  көлбеу және көлбеудің  проекциясы</div><div class="d" style="left:421.0px;top:200.40px">ұғымдарын меңгеру</div><div class="d" style="left:421.0px;top:227.90px">7.1.2.9 түзудің түзуге түсірілген перпендикулярдың біреу</div><div class="d" style="left:421.0px;top:255.40px">ғана болуы туралы теореманы дәлелдеу және қолдану</div><div class="d" style="left:112.5px;top:310.90px"><b>Бағалау критерийі</b></div><div class="d" style="left:421.0px;top:310.90px"><i>Білім алушы</i></div><div class="d" style="left:495.0px;top:338.90px">•</div><div class="d" style="left:527.0px;top:338.90px">Перпендикуляр, көлбеу және көлбеудің проекциясы</div><div class="d" style="left:527.0px;top:366.40px">ұғымдарын қолданады</div><div class="d" style="left:495.0px;top:394.40px">•</div><div class="d" style="left:527.0px;top:394.40px">Түзуге жүргізілген перпендикулярдың жалғыздығы</div><div class="d" style="left:533.0px;top:420.90px">туралы теореманы есте сақтауды қолданады</div><div class="d" style="left:112.5px;top:449.40px"><b>Ойлау дағдыларының</b></div><div class="d" style="left:421.0px;top:449.40px">Қолдану</div><div class="d" style="left:112.5px;top:476.90px"><b>деңгейі</b></div><div class="d" style="left:112.5px;top:531.90px"><b>1-тапсырма</b></div><div class="d" style="left:112.5px;top:559.40px;word-spacing:0.43px"><i>A</i> нүктесінен түзуге <i>AB</i> перпендикуляры мен <i>AC</i> көлбеуі жүргізілген. Егер перпендикуляр</div><div class="d" style="left:112.5px;top:586.90px">мен көлбеудің ұзындықтарының қосындысы 18 см, ал айырмасы 3 см болса, онда <i>A</i></div><div class="d" style="left:112.5px;top:614.40px;word-spacing:-1.05px">нүктесінен түзуге дейінгі арақашықтықты табыңыз.</div><div class="d" style="left:112.5px;top:669.40px"><b>Дескриптор</b></div><div class="d" style="left:302.5px;top:669.40px"><i>Білім алушы</i></div><div class="d" style="left:311.0px;top:699.40px">–</div><div class="d" style="left:346.5px;top:699.40px;word-spacing:0.5px">сызбасын салады;</div><div class="d" style="left:311.0px;top:728.65px">–</div><div class="d" style="left:346.5px;top:728.65px;word-spacing:0.8px">перпендикуляр, көлбеу және көлбеудің проекциясы ұғымдарын</div><div class="d" style="left:346.5px;top:756.15px">қолданады;</div><div class="d" style="left:311.0px;top:785.65px">–</div><div class="d" style="left:346.5px;top:785.65px;word-spacing:0.55px">шартына байланысты теңдеулер жүйесін құрастырады;</div><div class="d" style="left:311.0px;top:814.90px">–</div><div class="d" style="left:346.5px;top:814.90px;word-spacing:0.6px">перпендикулярдың ұзындығын табады.</div><div class="d" style="left:112.5px;top:869.90px"><b>2-тапсырма</b></div><div class="d" style="left:112.5px;top:897.40px;word-spacing:0.12px">Тең қабырғалы <i>ABC</i> үшбұрышында <i>AK</i> биссектрисасы жүргізілген. <i>K</i> нүктеінен <i>AC</i> түзуіне</div><div class="d" style="left:112.5px;top:924.90px">дейінгі қашықтық  8 см. <i>A</i> төбесінен <i>BC</i> түзуіне дейінгі қашықтықты табыңыз.</div><div class="d" style="left:112.5px;top:979.90px"><b>Дескриптор</b></div><div class="d" style="left:254.5px;top:979.90px"><i>Білім алушы</i></div><div class="d" style="left:311.0px;top:1009.40px">–</div><div class="d" style="left:346.5px;top:1009.40px;word-spacing:0.5px">сызбасын салады;</div><div class="d" style="left:311.0px;top:1038.65px">–</div><div class="d" style="left:346.5px;top:1038.65px;word-spacing:0.35px">нүктеден түзуге дейінгі қашықтықты сызбада көрсетеді;</div><div class="d" style="left:311.0px;top:1068.15px">–</div><div class="d" style="left:346.5px;top:1068.15px;word-spacing:0.3px">тікбұрышты үшбұрыштың 30<span class="sup">0</span> қарсы жатқан катет гипотенузаның</div><div class="d" style="left:346.5px;top:1095.65px;word-spacing:0.6px">жартысына тең қасиетін қолданады;</div><div class="d" style="left:311.0px;top:1124.90px">–</div><div class="d" style="left:346.5px;top:1124.90px">қашықтықты есептейді.</div><div class="d" style="left:112.5px;top:1152.40px"><b>3-тапсырма</b></div><div class="d" style="left:149.5px;top:1179.90px">1.</div><div class="d" style="left:187.0px;top:1179.90px;word-spacing:0.29px">Түзудің әрбір нүктесінен оған перпендикуляр болатын бір ғана түзу жүргізуге</div><div class="d" style="left:187.0px;top:1207.40px">болатынын дәлелдеңіз.</div><div class="d" style="left:149.5px;top:1235.90px">2.</div><div class="d" style="left:187.0px;top:1235.90px">Түзудің бойында жатпайтын бір нүктеден оған перпендикуляр болатын тек бір ғана</div><div class="d" style="left:187.0px;top:1263.40px">түзу жүргізуге болатынын дәлелдеңіз.</div><div class="d" style="left:112.5px;top:1318.40px"><b>Дескриптор</b></div><div class="d" style="left:254.5px;top:1318.40px"><i>Білім алушы</i></div><div class="d" style="left:311.0px;top:1347.90px">–</div><div class="d" style="left:346.5px;top:1347.90px">әрбір жағдайға сызба салады;</div><div class="d" style="left:311.0px;top:1377.40px">–</div><div class="d" style="left:346.5px;top:1377.40px">әрбір жағдайға дәлелдеу тәсілін анықтайды;</div><div class="d" style="left:311.0px;top:1406.90px">–</div><div class="d" style="left:346.5px;top:1406.90px">перпендикуляр түзулердің қасиеттерін қолданады;</div><div class="d" style="left:311.0px;top:1435.90px">–</div><div class="d" style="left:346.5px;top:1435.90px">түзуге жүргізілген перпендикулярдың жалғыздығы туралы теореманы</div><div class="d" style="left:346.5px;top:1463.40px">дәлелдейді.</div><div class="d" style="left:584.0px;top:1551.90px">45</div></div></div><div class="tnum" style="top:129.9px">43</div><div class="tnum" style="top:431.7px">44</div><div class="tnum" style="top:733.5px">45</div></div><!--/side-->
<div id="sidescroll"><svg style="left:0;top:0" width="25" height="754" viewBox="0 0 25 754"><path d="M7 16l5.500-6 5.500 6z" fill="#505050"/><rect x="2.200" y="513.100" width="20.800" height="27.400" fill="#c1c1c1"/><path d="M7 738.500l5.500 6 5.500-6z" fill="#505050"/></svg></div>
<div id="mainscroll"><svg style="left:0;top:0" width="25" height="754" viewBox="0 0 25 754"><path d="M7 16l5.500-6 5.500 6z" fill="#505050"/><rect x="2.200" y="513.700" width="20.800" height="25.200" fill="#c1c1c1"/><path d="M7 738.500l5.500 6 5.500-6z" fill="#505050"/></svg></div>
<div id="pdfbar">
<div class="abs" style="left:36px;top:33px;width:24px;height:3px;background:#fff"></div><div class="abs" style="left:36px;top:41px;width:24px;height:3px;background:#fff"></div><div class="abs" style="left:36px;top:48px;width:24px;height:3px;background:#fff"></div>
<div class="ptxt" id="ptitle" style="left:96px;top:27.6px;font-size:20px;letter-spacing:.33px;-webkit-text-stroke:.65px #fff">ФО_Геометрия_7кл_каз.pdf</div>
<div class="pbox" style="left:755px;width:35px"></div>
<div class="ptxt" style="left:762px">45</div>
<div class="ptxt" style="left:795.3px;font-size:21.5px;top:27.5px">/</div><div class="ptxt" style="left:810.6px;letter-spacing:-0.5px">62</div>
<div class="psep" style="left:862px"></div>
<div class="abs" style="left:885px;top:40.5px;width:18px;height:3px;background:#fff"></div>
<div class="pbox" style="left:924px;width:66px"></div>
<div class="ptxt" style="left:933px">100%</div>
<div class="abs" style="left:1011px;top:40.5px;width:18px;height:3px;background:#fff"></div>
<div class="abs" style="left:1018.5px;top:33px;width:3px;height:18px;background:#fff"></div>
<div class="psep" style="left:1050px"></div>
<svg style="left:1079px;top:31px" width="28" height="22" viewBox="0 0 28 22"><rect x="1.5" y="1.5" width="25" height="19" rx="1.5" fill="none" stroke="#fff" stroke-width="3"/><path fill="#fff" d="M14 4.6l4.2 5h-8.4zM14 17.4l4.2-5h-8.4z"/></svg>
<svg style="left:1126.3px;top:27.2px" width="30" height="30" viewBox="0 0 24 24"><path fill="#fff" d="M7.34 6.41L.86 12.9l6.49 6.48 6.49-6.48-6.5-6.49zM3.69 12.9l3.66-3.66L11 12.9l-3.66 3.66-3.65-3.66zm15.67-6.26C17.61 4.88 15.3 4 13 4V.76L8.76 5 13 9.24V6c1.79 0 3.58.68 4.95 2.05 2.73 2.73 2.73 7.17 0 9.9C16.58 19.32 14.79 20 13 20c-.97 0-1.94-.21-2.84-.61l-1.49 1.49C10.02 21.62 11.51 22 13 22c2.3 0 4.61-.88 6.36-2.64 3.52-3.51 3.52-9.21 0-12.72z"/></svg>
<svg style="left:1749px;top:26.8px" width="30" height="30" viewBox="0 0 24 24"><path fill="#f1f1f1" d="M19 9h-4V3H9v6H5l7 7 7-7zM5 18v2h14v-2H5z"/></svg>
<svg style="left:1803px;top:26.8px" width="30" height="30" viewBox="0 0 24 24"><path fill="#f1f1f1" d="M19 8H5c-1.66 0-3 1.34-3 3v6h4v4h12v-4h4v-6c0-1.66-1.34-3-3-3zm-3 11H8v-5h8v5zm3-7c-.55 0-1-.45-1-1s.45-1 1-1 1 .45 1 1-.45 1-1 1zm-1-9H6v4h12V3z"/></svg>
<svg style="left:1857px;top:27px" width="30" height="30" viewBox="0 0 24 24"><path fill="#f1f1f1" d="M12 8c1.1 0 2-.9 2-2s-.9-2-2-2-2 .9-2 2 .9 2 2 2zm0 2c-1.1 0-2 .9-2 2s.9 2 2 2 2-.9 2-2-.9-2-2-2zm0 6c-1.1 0-2 .9-2 2s.9 2 2 2 2-.9 2-2-.9-2-2-2z"/></svg>
</div>
<div id="taskbar"><svg style="left:0;top:0" width="1920" height="60" viewBox="0 1020 1920 60" font-family="Liberation Sans, sans-serif">
<defs><linearGradient id="tbg" x1="0" x2="1" y1="0" y2="0"><stop offset="0" stop-color="#213a48"/><stop offset=".5" stop-color="#203746"/><stop offset=".62" stop-color="#1f3346"/><stop offset=".78" stop-color="#1d2e44"/><stop offset="1" stop-color="#1c2a43"/></linearGradient><linearGradient id="edg" x1=".1" y1="1" x2=".9" y2="0"><stop offset="0" stop-color="#0b4f9c"/><stop offset=".45" stop-color="#1c8fd8"/><stop offset=".75" stop-color="#2fc3d8"/><stop offset="1" stop-color="#5fd96a"/></linearGradient><linearGradient id="hill1" x1="0" y1="0" x2="1" y2="1"><stop offset="0" stop-color="#d6b52c"/><stop offset=".5" stop-color="#a9a824"/><stop offset="1" stop-color="#c9b22a"/></linearGradient><linearGradient id="hill2" x1="0" y1="0" x2="1" y2="0"><stop offset="0" stop-color="#6f9512"/><stop offset=".35" stop-color="#8aa614"/><stop offset=".55" stop-color="#d4d418"/><stop offset=".75" stop-color="#93ad18"/><stop offset="1" stop-color="#b9c41c"/></linearGradient><linearGradient id="sun" x1="0" y1="0" x2="1" y2="1"><stop offset="0" stop-color="#ffc22e"/><stop offset="1" stop-color="#f07c12"/></linearGradient><clipPath id="sbc"><rect x="74" y="1021.500" width="428.500" height="57"/></clipPath></defs>
<rect x="0" y="1020" width="1920" height="60" fill="url(#tbg)"/>
<g transform="translate(23.800 1038) scale(.2795)" fill="#fff"><path d="M0 12.402l35.687-4.860.016 34.423-35.670.203zm35.670 33.529l.028 34.453L.028 75.480.026 45.700zm4.326-39.025L87.314 0v41.527l-47.318.376zm47.329 39.349l-.011 41.340-47.318-6.678-.066-34.739z"/></g>
<rect x="72.600" y="1020" width="431.700" height="60" fill="#c6c8ca"/><rect x="74.200" y="1021.700" width="428.400" height="56.800" fill="#f2f2f2"/>
<g fill="none" stroke="#1a1a1a" stroke-width="2"><circle cx="105.300" cy="1046.500" r="7.800"/><path d="M99.800 1052.100L90.800 1061.300"/></g>
<text x="132.7" y="1059.7" textLength="62.9" lengthAdjust="spacingAndGlyphs" font-size="22" font-weight="normal" fill="#1b2440" >Поиск</text>
<g clip-path="url(#sbc)"><path d="M383 1081L409 1051.500 418 1046.500 437 1044 457 1049 467 1055 481 1061 503 1066.500V1081z" fill="url(#hill1)"/><g stroke="#8ea323" stroke-width="2.200" opacity=".75" fill="none"><path d="M398 1064l18 9M405 1056l26 13M414 1049l34 17M428 1046l32 15M444 1047l20 10M392 1071l12 6M484 1062l19 9"/></g><ellipse cx="413.300" cy="1047.600" rx="4.600" ry="3.800" fill="#5f9d3a"/><ellipse cx="449.500" cy="1046.800" rx="8" ry="3.600" fill="#eb9a1c"/><ellipse cx="443" cy="1044" rx="5" ry="2.600" fill="#a9b62a"/><ellipse cx="494" cy="1062.500" rx="8.500" ry="4.200" fill="#f0981a"/><rect x="417.900" y="1039.600" width="11" height="7.200" fill="#c8911a"/><rect x="417.900" y="1039.200" width="9" height="1.200" fill="#7a4a3a"/><rect x="426" y="1041" width="3" height="5.200" fill="#e9d9a6"/><g fill="#7a5520"><rect x="419.200" y="1041.600" width="1.200" height="1.600"/><rect x="421.700" y="1041.600" width="1.200" height="1.600"/><rect x="419.200" y="1044.200" width="1.200" height="1.600"/><rect x="421.700" y="1044.200" width="1.200" height="1.600"/></g><rect x="428.800" y="1028.700" width="7" height="16.800" fill="#dba51c"/><rect x="433.300" y="1028.700" width="2.500" height="16.800" fill="#e8c66a"/><path d="M432.300 1022.600l-3.700 6.200h7.400z" fill="#8a5a46"/><g fill="#8a6420"><rect x="430.100" y="1031.500" width="1.500" height="2.400"/><rect x="430.100" y="1036" width="1.500" height="2.400"/><rect x="430.100" y="1040.400" width="1.500" height="2.400"/><rect x="433.900" y="1031.500" width="1" height="2.400"/><rect x="433.900" y="1036" width="1" height="2.400"/><rect x="433.900" y="1040.400" width="1" height="2.400"/></g><ellipse cx="459.600" cy="1060" rx="6.300" ry="4.600" fill="#f39a1e"/><path d="M400 1081L401.500 1073.500C412 1066 428 1062 442 1062 456 1062 470 1063 482 1066.500 492 1069.500 498 1071.500 503.500 1073.500V1081z" fill="url(#hill2)"/><g stroke="#6d9212" stroke-width="3" opacity=".55" fill="none"><path d="M416 1081l14-18M432 1081l16-19M452 1081l14-17M470 1081l12-14M488 1081l9-11"/></g><path d="M402 1074.500c0-6 4-11 10-11.500 5-.5 9 2 12 5-8 1.500-16 4-22 8z" fill="#3f9a4c"/><rect x="466.700" y="1058.600" width="9.500" height="8.400" fill="#c3cae0"/><rect x="476.200" y="1058.600" width="5" height="9.200" fill="#f4f1ee"/><path d="M465 1058.800l2.900-4.300h10.900l3 4.300-1 .6-2.600-3.400-1.800 2.800z" fill="#d2581e"/><g fill="#7a4a3a"><rect x="468" y="1060" width="1.200" height="2"/><rect x="472.800" y="1060" width="1.200" height="2"/><rect x="468" y="1063.800" width="1.200" height="2"/><rect x="472.800" y="1063.800" width="1.200" height="2"/><rect x="478" y="1060.500" width="1" height="2"/><rect x="478" y="1064.500" width="1" height="2"/></g></g>
<g fill="none" stroke="#fff" stroke-width="1.700"><path d="M528.500 1042.300v-2.300h15v2.300M528.500 1057.600v2.300h15v-2.300"/><rect x="530.300" y="1044.800" width="12" height="10.400"/><path d="M550.600 1038v23"/></g><rect x="549.200" y="1045.800" width="2.800" height="3" fill="#fff"/>
<g><defs><linearGradient id="edt" x1="0" y1=".5" x2="1" y2=".5"><stop offset="0" stop-color="#2aa8ec"/><stop offset=".5" stop-color="#2cc4d2"/><stop offset="1" stop-color="#62e566"/></linearGradient><linearGradient id="edb" x1="0" y1="0" x2=".8" y2="1"><stop offset="0" stop-color="#1d8be0"/><stop offset=".6" stop-color="#1260b4"/><stop offset="1" stop-color="#0f4f9c"/></linearGradient></defs><circle cx="611" cy="1050" r="18.200" fill="url(#edb)"/><path d="M592.800 1050A18.200 18.200 0 0 1 629.200 1048C630 1053 626 1057.600 620.300 1057.600 616 1057.600 613.300 1055.600 614.500 1053 616.500 1049.500 613.500 1043.800 607.500 1043.800 601 1043.800 594 1046.500 592.800 1050z" fill="url(#edt)"/><path d="M606.500 1051.500a4.500 4.500 0 1 1 7.800 1.300C613.300 1055.600 616 1057.600 620.300 1057.600 624.300 1057.600 627.500 1055.300 628.800 1052 628.600 1055 627.600 1058 626.200 1060.200 620 1062.300 610.500 1060.500 606.500 1051.500z" fill="#213846"/><circle cx="601.750" cy="1059.200" r="8.300" fill="#dcdad7"/><circle cx="601.750" cy="1056.200" r="3.100" fill="#9c9794"/><path d="M596 1063.600c1.100-2.700 3.200-3.700 5.750-3.700s4.650 1 5.750 3.700c-1.500 1.600-3.500 2.500-5.750 2.500s-4.250-.9-5.750-2.500z" fill="#9c9794"/></g>
<rect x="587.200" y="1076.800" width="48.800" height="3.200" fill="#76b9ed"/>
<g><rect x="656" y="1036.700" width="35.100" height="31.400" rx="3.500" fill="#f4f4f4"/><path d="M665 1039.800v-3.400a2.500 2.500 0 0 1 2.500-2.500h12a2.500 2.500 0 0 1 2.500 2.500v3.400" fill="none" stroke="#1eb4f4" stroke-width="2"/><rect x="666.100" y="1045.100" width="6.700" height="6.600" fill="#f25022"/><rect x="674.100" y="1045.100" width="6.800" height="6.600" fill="#7fba00"/><rect x="666.100" y="1053" width="6.700" height="6.800" fill="#00a4ef"/><rect x="674.100" y="1053" width="6.800" height="6.800" fill="#ffb900"/></g>
<g><path d="M718.900 1043.500L737 1033l18.100 10.500v3h-36.200z" fill="#0f62b4"/><path d="M718.900 1043.500h36.200v22.300h-36.200z" fill="#1b8de0"/><path d="M722.400 1043.400h29.200L737 1053.800z" fill="#f3f3f3"/><path d="M722.400 1043.400h29.200l-1.500 1.100h-26.200z" fill="#d9dcdf"/><path d="M737 1053.800l18.100-10.300v22.300z" fill="#3cc2f4"/><path d="M737 1053.800l18.100 12h-36.200z" fill="#1a84da"/><path d="M718.900 1043.500L737 1053.800l-18.100 12z" fill="#2098e8"/></g>
<rect x="769" y="1020" width="53.400" height="60" fill="#a56731"/><rect x="822.400" y="1020" width="6.600" height="60" fill="#9c5d28"/><rect x="821.800" y="1020" width="1" height="60" fill="#8d5122"/><rect x="769" y="1076.800" width="60" height="3.200" fill="#f58220"/>
<defs><linearGradient id="yl" gradientUnits="userSpaceOnUse" x1="785.400" y1="1041.300" x2="795.800" y2="1052"><stop offset="0" stop-color="#ff7a14"/><stop offset="1" stop-color="#ff3d27"/></linearGradient><linearGradient id="yr" gradientUnits="userSpaceOnUse" x1="806.200" y1="1041.300" x2="795.800" y2="1052"><stop offset="0" stop-color="#ff5fd6"/><stop offset=".55" stop-color="#ff3f70"/><stop offset="1" stop-color="#ff3a2a"/></linearGradient></defs><circle cx="795.900" cy="1050.100" r="17.900" fill="#fff"/><g stroke-width="5" fill="none"><path d="M795.800 1050.500l10.500-9.900" stroke="url(#yr)" transform="translate(0 .3)"/><path d="M795.800 1050.800l-10.500-9.900" stroke="url(#yl)"/><path d="M795.800 1049.500v14.200" stroke="#ff3526"/></g>
<g><path d="M845.100 1039.100a2 2 0 0 1 2-2h9.300l2.600 2.400h16.100a1.700 1.700 0 0 1 1.700 1.700v2.300h-31.700z" fill="#e6a817"/><rect x="845.100" y="1041.300" width="31.700" height="20.800" rx="1.300" fill="#ffd969"/><path d="M845.100 1056h31.700v4.800a1.300 1.300 0 0 1-1.300 1.300h-29.100a1.300 1.300 0 0 1-1.300-1.300z" fill="#f9cd55"/><path d="M850.500 1063.100v-10.400a1.500 1.500 0 0 1 1.500-1.500h17.300a1.500 1.500 0 0 1 1.500 1.500v10.400h-5v-6.700h-9.900v6.700z" fill="#3f9be8"/></g><rect x="837.200" y="1076.800" width="47.400" height="3.200" fill="#76b9ed"/>
<rect x="892.700" y="1020" width="60.200" height="60" fill="#4b5c67"/><rect x="892.700" y="1076.800" width="60.200" height="3.200" fill="#76b9ed"/>
<g><circle cx="922.500" cy="1049.700" r="18" fill="#db4437"/><path d="M922.500 1049.700l-15.600-9a18 18 0 0 0 8.600 25.600z" fill="#0f9d58"/><path d="M922.500 1049.700l-7 16.600a18 18 0 0 0 24.900-16.600 18 18 0 0 0-2.300-8.900h-15.600z" fill="#ffcd40"/><path d="M906.900 1040.700a18 18 0 0 1 31.200 0z" fill="#db4437"/><circle cx="922.500" cy="1049.700" r="8.300" fill="#f1f1f1"/><circle cx="922.500" cy="1049.700" r="6.600" fill="#4285f4"/><circle cx="932.500" cy="1059.700" r="11" fill="#8d6e63"/><text x="928.3" y="1064.3" textLength="8.6" lengthAdjust="spacingAndGlyphs" font-size="12.5" font-weight="normal" fill="#e8dcd8" >A</text>
</g>
<circle cx="984.800" cy="1049.700" r="18" fill="#fc3f1d"/><path transform="translate(1.400 0)" d="M988.600 1060.500h-3.700v-18.300h-1.650c-3.020 0-4.600 1.500-4.600 3.760 0 2.560 1.100 3.750 3.360 5.260l1.870 1.260-5.370 8.020h-4l4.830-7.180c-2.780-1.990-4.340-3.920-4.340-7.190 0-4.090 2.850-6.870 8.230-6.870h5.370z" fill="#fff"/>
<g><path d="M1044 1037.500h17.300a1.500 1.500 0 0 1 1.500 1.500v22a1.500 1.500 0 0 1-1.500 1.500H1044z" fill="#f6e9e4"/><path d="M1044 1037.500h17.300a1.500 1.500 0 0 1 1.500 1.500v22a1.500 1.500 0 0 1-1.500 1.500H1044z" fill="none" stroke="#d24726" stroke-width="1.600"/><path d="M1050 1042.500v7h7a7 7 0 0 0-7-7z" fill="#d24726"/><path d="M1048.300 1044.500a6.500 6.500 0 1 0 6.500 6.500h-6.500z" fill="#d24726" opacity=".0"/><path d="M1046 1054.500h13M1046 1057.800h13" stroke="#d24726" stroke-width="1.400"/><path d="M1032 1037.600l17.500-3.600v32l-17.500-3.600z" fill="#d24726"/><path d="M1037.300 1043.300h4.300c2.900 0 4.700 1.600 4.700 4.200 0 2.700-1.900 4.400-4.900 4.400h-1.500v4.800h-2.600zm2.600 2.200v4.200h1.300c1.500 0 2.300-.8 2.300-2.200 0-1.300-.8-2-2.300-2z" fill="#fff"/></g><rect x="1023" y="1076.800" width="48" height="3.200" fill="#76b9ed"/><rect x="1058" y="1076.800" width="1.200" height="3.200" fill="#3d6f9a"/>
<rect x="1082" y="1020" width="26.300" height="60" fill="#f0f0f0"/><g fill="none" stroke="#555" stroke-width="2"><path d="M1089.600 1038.800l5.600-5.600 5.600 5.600M1089.600 1063.200l5.600 5.600 5.600-5.600"/></g>
<text x="1118.6" y="1057" textLength="108.9" lengthAdjust="spacingAndGlyphs" font-size="17.6" font-weight="normal" fill="#d9dee4" >Рабочий стол</text>
<g fill="none" stroke="#fff" stroke-width="1.500"><path d="M1240 1029.200l4.400 4.400-4.400 4.400M1245.800 1029.200l4.400 4.400-4.400 4.400"/></g>
<circle cx="1314.200" cy="1049.700" r="15" fill="url(#sun)"/><path d="M1313.800 1059.400a4.200 4.200 0 0 1 .6-8.300 6 6 0 0 1 11.300-1.600 5 5 0 0 1 1.600 9.900z" fill="#dfe9f7"/><path d="M1313.800 1059.400a4.200 4.200 0 0 1-.4-6.300h14.500a5 5 0 0 1-.6 6.300z" fill="#b5cdea"/>
<text x="1344.5" y="1058.3" textLength="40.1" lengthAdjust="spacingAndGlyphs" font-size="21.5" font-weight="normal" fill="#fff" >-5°C</text>
<path d="M1429.800 1054l8.400-8.400 8.400 8.400" fill="none" stroke="#fff" stroke-width="1.700"/>
<g fill="none" stroke="#fff" stroke-width="1.400"><path d="M1476 1046.800h4l5-4.600v16l-5-4.600h-4z"/><path d="M1488.500 1046.300a5.500 5.500 0 0 1 0 7.800"/><path d="M1491.700 1043.600a9.500 9.500 0 0 1 0 13.200" opacity=".55"/><path d="M1494.900 1041.200a13.500 13.500 0 0 1 0 18" opacity=".3"/></g>
<g><rect x="1523.600" y="1044.500" width="20.600" height="11.600" fill="none" stroke="#fff" stroke-width="1.300"/><rect x="1544.800" y="1048" width="1.800" height="4.500" fill="#fff"/><rect x="1525.400" y="1046.300" width="8.400" height="8" fill="#fff"/><circle cx="1539.400" cy="1055.500" r="6.600" fill="#0f9a2a"/><path d="M1539.400 1051c2.600 1.800 3.400 4.400 1.500 7.400h-3c-1.900-3-1.100-5.600 1.500-7.400zM1539.400 1053v6.500" fill="none" stroke="#fff" stroke-width="1"/></g>
<g><rect x="1571.700" y="1040.800" width="31.700" height="17.400" rx="1.500" fill="none" stroke="#fff" stroke-width="1.300"/><path d="M1575.500 1045h24.500M1575.500 1049.500h24.500" stroke="#fff" stroke-width="1.300" stroke-dasharray="1.600 1.700"/><path d="M1575.500 1054h3M1580.500 1054h14.500M1597 1054h3" stroke="#fff" stroke-width="1.300"/></g>
<g fill="none" stroke="#fff" stroke-width="1.300"><rect x="1638.400" y="1042.900" width="18" height="14.200" rx="1"/><path d="M1638.400 1052.200h18M1647.400 1052.200v4.900"/></g>
<text x="1688.6" y="1056.6" textLength="32.8" lengthAdjust="spacingAndGlyphs" font-size="17.4" font-weight="normal" fill="#fff" >ENG</text>
<text x="1765.1" y="1042.9" textLength="41.2" lengthAdjust="spacingAndGlyphs" font-size="17.4" font-weight="normal" fill="#fff" >15:01</text>
<text x="1743.9" y="1070.9" textLength="85.3" lengthAdjust="spacingAndGlyphs" font-size="17.4" font-weight="normal" fill="#fff" >10.03.2024</text>
<path d="M1858.800 1038.700h22.700v16.800h-7l-4.300 4.700-4.300-4.700h-7.100z" fill="none" stroke="#fff" stroke-width="1.500"/>
<rect x="1912.600" y="1020" width="1.200" height="60" fill="#7f8a98"/>
</svg></div><!--/taskbar-->
</body>
</html>
